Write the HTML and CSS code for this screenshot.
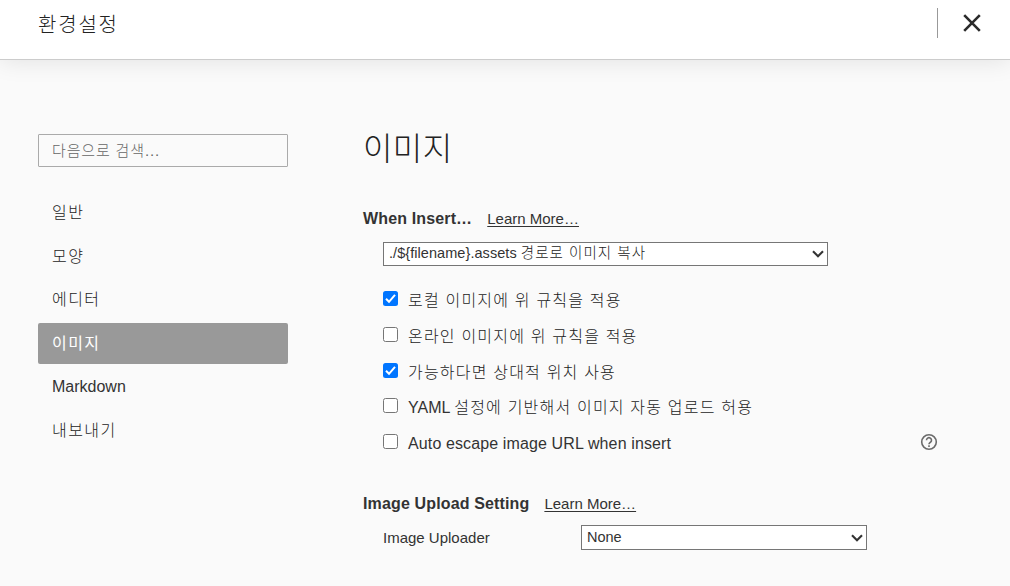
FILE: index.html
```html
<!DOCTYPE html>
<html lang="ko"><head><meta charset="utf-8"><title>환경설정</title><link rel="stylesheet" href="styles.css"></head>
<body>
<header class="topbar"><h1 class="title">환경설정</h1>
<button class="close" aria-label="닫기"><svg width="18" height="18" viewBox="0 0 18 18"><path d="M1.2 1.2 16.8 16.8M16.8 1.2 1.2 16.8"/></svg></button></header>
<div class="layout">
<aside class="sidebar"><input class="search" placeholder="다음으로 검색...">
<nav class="nav"><a><span class="ko">일반</span></a><a><span class="ko">모양</span></a><a><span class="ko">에디터</span></a><a class="active"><span class="ko">이미지</span></a><a><span class="md">Markdown</span></a><a><span class="ko">내보내기</span></a></nav></aside>
<main class="main">
<h2 class="heading">이미지</h2>
<div class="section"><b>When Insert…</b><u>Learn More…</u></div>
<div class="select wide"><span class="path">./${filename}.assets <span class="path-ko">경로로 이미지 복사</span></span><svg class="chev" width="12" height="8" viewBox="0 0 12 8"><path d="M1 1.2 6 6.2 11 1.2"/></svg></div>
<div class="checks">
<div class="check"><i class="box on"><svg width="15" height="15" viewBox="0 0 15 15"><path d="M3 7.8 6 10.8 12 3.8"/></svg></i><span class="ko rule">로컬 이미지에 위 규칙을 적용</span></div>
<div class="check"><i class="box"></i><span class="ko rule">온라인 이미지에 위 규칙을 적용</span></div>
<div class="check"><i class="box on"><svg width="15" height="15" viewBox="0 0 15 15"><path d="M3 7.8 6 10.8 12 3.8"/></svg></i><span class="ko rule">가능하다면 상대적 위치 사용</span></div>
<div class="check"><i class="box"></i><span class="rule">YAML <span class="ko">설정에 기반해서 이미지 자동 업로드 허용</span></span></div>
<div class="check"><i class="box"></i><span class="latin">Auto escape image URL when insert</span><svg class="help" width="18" height="18" viewBox="0 0 18 18"><circle cx="9" cy="9" r="7.3"/><path d="M6.5 7.2a2.5 2.5 0 1 1 4.1 1.9C9.6 9.9 9 10.2 9 11.2M9 12.3v1.6"/></svg></div>
</div>
<div class="section upload"><b>Image Upload Setting</b><u>Learn More…</u></div>
<div class="uploader"><span class="label">Image Uploader</span><div class="select small"><span class="none">None</span><svg class="chev" width="12" height="8" viewBox="0 0 12 8"><path d="M1 1.2 6 6.2 11 1.2"/></svg></div></div>
</main></div></body></html>
```
FILE: styles.css
```css
*{box-sizing:border-box}
body{margin:0;width:1010px;height:586px;overflow:hidden;background:#fafafa;color:#333;font:16px "Liberation Sans","Noto Sans CJK KR",sans-serif}
.topbar{height:60px;background:#fff;border-bottom:1px solid #ccc;box-shadow:0 1px 24px rgba(0,0,0,.1);display:flex;justify-content:space-between;padding:8px 29px 0 38px}
.title{margin:1px 0 0;font-size:20px;line-height:32px;font-weight:300;letter-spacing:1.8px;color:#222}
.close{width:44px;height:30px;border:0;border-left:1px solid #999;background:none;padding:0;display:flex;justify-content:flex-end;align-items:center}
.close path{stroke:#2b2b2b;stroke-width:2.6;fill:none}
.layout{display:flex;padding-left:38px}
.sidebar{width:250px;padding-top:74px}
.search{display:block;width:250px;height:33px;border:1px solid #aaa;border-radius:1px;background:transparent;padding:0 13px 1px;font:300 15px "Liberation Sans","Noto Sans CJK KR",sans-serif;letter-spacing:.85px}
.search::placeholder{color:#666}
.nav{margin-top:25px;display:flex;flex-direction:column;gap:2.5px}
.nav a{height:41px;line-height:41px;padding-left:14px;font-weight:300}
.ko{color:#1c1c1c;letter-spacing:1.2px}
.nav .ko{letter-spacing:1.45px}
.nav .active{background:#999;border-radius:2px;font-weight:400}
.active .ko{color:#fff}
.main{margin-left:75px;width:580px;padding-top:65px}
.heading{margin:0;font-size:32px;line-height:48px;font-weight:300;letter-spacing:.4px;color:#222}
.section{display:flex;align-items:center;height:20px;margin-top:36px;gap:15px}
.section b{letter-spacing:.14px}
.section u{font-size:15px;line-height:18px;margin-top:-1px;text-underline-offset:2px}
.select{display:flex;align-items:center;justify-content:space-between;background:#fff;border:1px solid #767676;height:25px;padding:0 3px 0 5px;font-size:14.5px;font-weight:300}
.wide{width:445px;height:24px;margin:13px 0 0 20px}
.path{padding-bottom:5px;letter-spacing:.06px}
.path-ko{color:#1c1c1c;letter-spacing:1.05px}
.none{padding-bottom:2px}
.chev path{fill:none;stroke:#333;stroke-width:2.1}
.checks{margin:15px 0 0 20px;height:180px}
.check{display:flex;align-items:center;height:35.7px;font-weight:300}
.box{width:15px;height:15px;border:1px solid #767676;border-radius:2.5px;background:#fff;margin-right:10px;display:flex}
.on{border:0;background:#0075ff}
.box path{fill:none;stroke:#fff;stroke-width:2}
.rule{padding-top:1px}
.latin{padding-top:4px;letter-spacing:.12px}
.help{margin:1px 5px 0 auto;fill:none;stroke:#6b6b6b;stroke-width:1.6}
.upload{margin-top:32px}
.upload b{padding-top:1px}
.upload u{margin-top:1px}
.uploader{display:flex;align-items:center;margin:12px 0 0 20px;height:25px;font-size:15px}
.label{width:198px}
.small{width:286px}
```
